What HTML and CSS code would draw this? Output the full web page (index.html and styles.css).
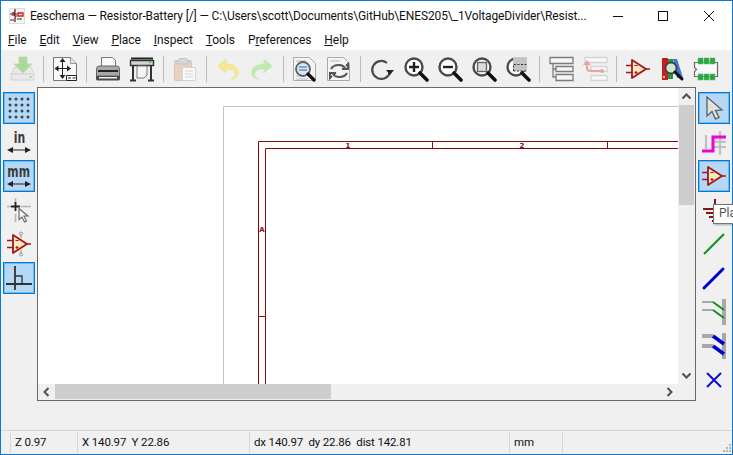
FILE: index.html
```html
<!DOCTYPE html>
<html>
<head>
    <meta charset="utf-8">
    <title>Eeschema</title>
    <link rel="stylesheet" href="styles.css">
</head>
<body>
    <svg class="defs" width="0" height="0">
        <defs>
            <g id="lens">
                <circle cx="11" cy="11" r="8.500" fill="#fff" stroke="#4a4a4a" stroke-width="2.400"/>
                <path d="M17 17l7 7" stroke="#111" stroke-width="3.600" stroke-linecap="round"/>
            </g>
            <g id="amp">
                <path d="M7 4l14 9-14 9z" fill="#fbe6c0" stroke="#a01818" stroke-width="1.800" stroke-linejoin="round"/>
                <path d="M1 9.500h6M1 16.500h6M21 13h4" stroke="#a01818" stroke-width="1.600"/>
                <path d="M9.500 9.500h3M9.500 16.500h3M11 15v3" stroke="#a01818" stroke-width="1.200"/>
            </g>
        </defs>
    </svg>

    <div class="window">
        <div class="titlebar">
            <svg class="app-icon" viewBox="0 0 16 16">
                <rect x="0.500" y="0.500" width="15" height="15" fill="#f4f4f4" stroke="#ddd"/>
                <path d="M6 1v3l-2 1 3 1-3 1 3 1-1 1v5" fill="none" stroke="#7a1c1c" stroke-width="1.300"/>
                <path d="M1 6h3M1 12h4" stroke="#333" stroke-width="1.200"/>
                <path d="M9 5h5v3H9z" fill="none" stroke="#d01818" stroke-width="1.300"/>
                <path d="M8 11h5" stroke="#1c8a2e" stroke-width="1.300"/>
            </svg>
            <span class="title-text">Eeschema — Resistor-Battery [/] — C:\Users\scott\Documents\GitHub\ENES205\_1VoltageDivider\Resist...</span>
            <div class="caption-btns">
                <svg viewBox="0 0 45 30"><path d="M17 15.500h10" stroke="#111"/></svg>
                <svg viewBox="0 0 45 30"><rect x="17.500" y="10.500" width="9" height="9" fill="none" stroke="#111"/></svg>
                <svg viewBox="0 0 45 30"><path d="M18 10l10 10M28 10L18 20" stroke="#111"/></svg>
            </div>
        </div>

        <div class="menubar">
            <span class="menu-item"><u>F</u>ile</span>
            <span class="menu-item"><u>E</u>dit</span>
            <span class="menu-item"><u>V</u>iew</span>
            <span class="menu-item"><u>P</u>lace</span>
            <span class="menu-item"><u>I</u>nspect</span>
            <span class="menu-item"><u>T</u>ools</span>
            <span class="menu-item">P<u>r</u>eferences</span>
            <span class="menu-item"><u>H</u>elp</span>
        </div>

        <div class="toolbar">
            <div class="tool">
                <svg viewBox="0 0 26 26">
                    <path d="M2 18l4-7h16l3 7v6H2z" fill="#e8e8e8" stroke="#d4d4d4"/>
                    <path d="M2 18h23" stroke="#cfcfcf"/>
                    <circle cx="21.500" cy="21" r="1" fill="#7fd67f"/>
                    <path d="M10 1h8v7h5l-9 9-9-9h5z" fill="#a9d99b" stroke="#c3dcb8"/>
                </svg>
            </div>
            <div class="sep"></div>
            <div class="tool">
                <svg viewBox="0 0 26 26">
                    <path d="M1.500 1.500h17l6 6v17h-23z" fill="#fafafa" stroke="#777"/>
                    <path d="M18.500 1.500v6h6" fill="#e4e4e4" stroke="#999"/>
                    <path d="M10.500 4v17M3.500 12.500h15" stroke="#222"/>
                    <path d="M10.500 2l-3 4h6zM10.500 23l-3-4h6zM2.500 12.500l4-3v6zM19 12.500l-4-3v6z" fill="#222"/>
                    <path d="M14.500 19.500h10v5h-10z" fill="#fff" stroke="#222"/>
                    <path d="M16 22h3M20.500 22h3" stroke="#222"/>
                </svg>
            </div>
            <div class="sep"></div>
            <div class="tool">
                <svg viewBox="0 0 26 26">
                    <path d="M6.500 11V1.500h11l3 3V11" fill="#fafafa" stroke="#777"/>
                    <path d="M1.500 13q0-3 3-3h17q3 0 3 3v7h-23z" fill="#a8a8a8" stroke="#666"/>
                    <path d="M3 15h20" stroke="#222" stroke-width="2"/>
                    <path d="M1 20h24v3q0 1.500-2 1.500H3Q1 24.500 1 23z" fill="#4a4a4a"/>
                    <path d="M4 21h18v1.500H4z" fill="#f0f0f0"/>
                    <circle cx="22.500" cy="18" r="1" fill="#4fd04f"/>
                </svg>
            </div>
            <div class="tool">
                <svg viewBox="0 0 26 26">
                    <path d="M1.500 4.500h23v5h-23z" fill="#d4d4d4" stroke="#333" stroke-width="1.400"/>
                    <path d="M2 2.500h22" stroke="#222" stroke-width="2"/>
                    <path d="M4 9v15M22 9v15M1 24.500h6M19 24.500h6" stroke="#333" stroke-width="2"/>
                    <path d="M8 10h10v9l-3 3H8z" fill="#f6f6f6" stroke="#777"/>
                    <circle cx="21" cy="6" r="1.200" fill="#3ecf3e"/>
                </svg>
            </div>
            <div class="sep"></div>
            <div class="tool">
                <svg viewBox="0 0 26 26">
                    <rect x="2.500" y="4.500" width="17" height="20" rx="1.500" fill="#e6d3bd" stroke="#d5c4b0"/>
                    <path d="M7 5V2.500h8V5h2v3H5V5z" fill="#d8d8d8" stroke="#c4c4c4"/>
                    <path d="M10.500 11.500h13v13h-13z" fill="#fafafa" stroke="#d4d4d4"/>
                    <path d="M13 15h8M13 18h8M13 21h8" stroke="#d0d0d0"/>
                </svg>
            </div>
            <div class="sep"></div>
            <div class="tool">
                <svg viewBox="0 0 26 26">
                    <path d="M11 3L3 10l8 7v-4c5 0 8 1 9 4 1 2-1 5-4 6 6 0 8-4 7-8-1-5-6-7-12-7z" fill="#f7e98f" stroke="#f0e0a0"/>
                </svg>
            </div>
            <div class="tool">
                <svg viewBox="0 0 26 26">
                    <path d="M15 3l8 7-8 7v-4c-5 0-8 1-9 4-1 2 1 5 4 6-6 0-8-4-7-8 1-5 6-7 12-7z" fill="#bfe8b0" stroke="#cfeac4"/>
                </svg>
            </div>
            <div class="sep"></div>
            <div class="tool">
                <svg viewBox="0 0 26 26">
                    <path d="M1.500 1.500h16l6 6v17h-22z" fill="#f4f4f4" stroke="#aaa"/>
                    <path d="M4 5h10M4 20h6M4 23h12" stroke="#bbb"/>
                    <circle cx="11" cy="13" r="7" fill="#dbe6f4" stroke="#566" stroke-width="1.800"/>
                    <path d="M7 11h8M7 14h8" stroke="#6c8fc4" stroke-width="1.400"/>
                    <path d="M16 18l6 6" stroke="#111" stroke-width="3.200" stroke-linecap="round"/>
                </svg>
            </div>
            <div class="tool">
                <svg viewBox="0 0 26 26">
                    <path d="M1.500 1.500h16l6 6v17h-22z" fill="#f4f4f4" stroke="#aaa"/>
                    <path d="M4 5h10" stroke="#bbb"/>
                    <path d="M5 13q2-4 8-4 4 0 6 3l-3 1h6V8l-2 2" fill="none" stroke="#555" stroke-width="2"/>
                    <path d="M21 17q-2 4-8 4-4 0-6-3l3-1H4v5l2-2" fill="none" stroke="#555" stroke-width="2"/>
                </svg>
            </div>
            <div class="sep"></div>
            <div class="tool">
                <svg viewBox="0 0 26 26">
                    <path d="M21 16a9 9 0 1 1-3-9" fill="none" stroke="#4a4a4a" stroke-width="2.200"/>
                    <path d="M17 14h8l-4 5z" fill="#222"/>
                </svg>
            </div>
            <div class="tool">
                <svg viewBox="0 0 26 26">
                    <use href="#lens"/>
                    <path d="M6 11h10M11 6v10" stroke="#222" stroke-width="2.400"/>
                </svg>
            </div>
            <div class="tool">
                <svg viewBox="0 0 26 26">
                    <use href="#lens"/>
                    <path d="M6 11h10" stroke="#222" stroke-width="2.400"/>
                </svg>
            </div>
            <div class="tool">
                <svg viewBox="0 0 26 26">
                    <use href="#lens"/>
                    <rect x="6.500" y="6.500" width="9" height="9" fill="#ddd" stroke="#666" stroke-width="1.400"/>
                </svg>
            </div>
            <div class="tool">
                <svg viewBox="0 0 26 26">
                    <use href="#lens"/>
                    <rect x="8" y="1" width="14" height="14" fill="#c4c4c4"/>
                    <path d="M8.500 15V8.500h13.500" fill="none" stroke="#333" stroke-dasharray="2 1.500"/>
                    <path d="M8.500 15H22" fill="none" stroke="#333" stroke-dasharray="2 1.500"/>
                </svg>
            </div>
            <div class="sep"></div>
            <div class="tool">
                <svg viewBox="0 0 26 26">
                    <path d="M2 1.500h23v6H2zM8 10.500h17v5H8zM8 18.500h17v6H8z" fill="#f6f6f6" stroke="#7c7c7c" stroke-width="1.300"/>
                    <path d="M5 8v13h3M5 13h3" fill="none" stroke="#7c7c7c" stroke-width="1.300"/>
                </svg>
            </div>
            <div class="tool">
                <svg viewBox="0 0 26 26">
                    <path d="M3 1.500h22v5H3zM9 10.500h16v5H9zM9 19.500h16v5H9z" fill="#f8f8f8" stroke="#d4d4d4" stroke-width="1.300"/>
                    <path d="M5 8v4q0 3 3 3h11" fill="none" stroke="#f0a0a0" stroke-width="2"/>
                    <path d="M1 9l4-5 4 5z" fill="#f0a0a0"/>
                    <circle cx="20" cy="15" r="2" fill="#f0a0a0"/>
                </svg>
            </div>
            <div class="sep"></div>
            <div class="tool">
                <svg viewBox="0 0 26 26"><use href="#amp"/></svg>
            </div>
            <div class="tool">
                <svg viewBox="0 0 26 26">
                    <rect x="3" y="2" width="6" height="22" fill="#c81e1e"/>
                    <rect x="9" y="3" width="5" height="20" fill="#1f9c3a"/>
                    <path d="M14 3h4l6 19h-6z" fill="#3f74d8"/>
                    <circle cx="5" cy="21" r="1" fill="#fff"/>
                    <circle cx="12" cy="12" r="5.500" fill="#cfe6d2" stroke="#444" stroke-width="1.800"/>
                    <path d="M16 16l7 7" stroke="#111" stroke-width="3" stroke-linecap="round"/>
                </svg>
            </div>
            <div class="tool">
                <svg viewBox="0 0 26 26">
                    <path d="M1.500 6.500h23v14h-23v-5l2-2-2-2z" fill="#fafafa" stroke="#6a6a6a" stroke-width="1.200"/>
                    <path d="M5 2h5v6H5zM11 2h5v6h-5zM17 2h5v6h-5zM5 18h5v6H5zM11 18h5v6h-5zM17 18h5v6h-5z" fill="#22aa3c" stroke="#6cb87a" stroke-width="0.600"/>
                </svg>
            </div>
        </div>

        <div class="workspace">
            <div class="side-tools">
                <div class="tool on">
                    <svg viewBox="0 0 26 26" class="grid-dots">
                        <circle cx="4" cy="4" r="1.500"/><circle cx="10" cy="4" r="1.500"/><circle cx="16" cy="4" r="1.500"/><circle cx="22" cy="4" r="1.500"/>
                        <circle cx="4" cy="10" r="1.500"/><circle cx="10" cy="10" r="1.500"/><circle cx="16" cy="10" r="1.500"/><circle cx="22" cy="10" r="1.500"/>
                        <circle cx="4" cy="16" r="1.500"/><circle cx="10" cy="16" r="1.500"/><circle cx="16" cy="16" r="1.500"/><circle cx="22" cy="16" r="1.500"/>
                        <circle cx="4" cy="22" r="1.500"/><circle cx="10" cy="22" r="1.500"/><circle cx="16" cy="22" r="1.500"/><circle cx="22" cy="22" r="1.500"/>
                    </svg>
                </div>
                <div class="tool">
                    <span class="unit-text">in</span>
                    <svg class="unit-arrow" viewBox="0 0 26 8"><path d="M1 4l6-3v6zM25 4l-6-3v6z" fill="#222"/><path d="M4 4h18" stroke="#222"/></svg>
                </div>
                <div class="tool on">
                    <span class="unit-text">mm</span>
                    <svg class="unit-arrow" viewBox="0 0 26 8"><path d="M1 4l6-3v6zM25 4l-6-3v6z" fill="#222"/><path d="M4 4h18" stroke="#222"/></svg>
                </div>
                <div class="tool">
                    <svg viewBox="0 0 26 26">
                        <path d="M9.500 1v5M9.500 17v8M1 9.500h4M15 9.500h10" stroke="#b4b4b4" stroke-width="1.600"/>
                        <path d="M9.500 5v9M5 9.500h9" stroke="#222" stroke-width="1.800"/>
                        <path d="M13 11.500v11l3-2.500 2.500 5 2-1-2.500-5h4z" fill="#f4f4f4" stroke="#666" stroke-width="1.100"/>
                    </svg>
                </div>
                <div class="tool">
                    <svg viewBox="0 0 26 26">
                        <path d="M15 1v6M15 19v6" stroke="#b0b0b0" stroke-width="1.400"/>
                        <circle cx="15" cy="2.500" r="1.500" fill="#eee" stroke="#999"/>
                        <circle cx="15" cy="23.500" r="1.500" fill="#eee" stroke="#999"/>
                        <use href="#amp"/>
                    </svg>
                </div>
                <div class="tool on">
                    <svg viewBox="0 0 26 26">
                        <path d="M9 1v24M0 19h26" stroke="#333" stroke-width="1.800"/>
                        <path d="M9 11h7v8" fill="none" stroke="#333" stroke-width="1.300"/>
                    </svg>
                </div>
            </div>

            <div class="view-frame">
                <div class="canvas">
                    <svg class="sheet" width="640" height="296" viewBox="38 88 640 296">
                        <path d="M223.500 384V106.500H678" fill="none" stroke="#c4c4c4"/>
                        <path d="M258.500 384V141.500H678M265.500 384V148.500H678" fill="none" stroke="#8a0a0a"/>
                        <path d="M432.500 141v7M607.500 141v7M258 316.500h7" stroke="#8a0a0a"/>
                        <text x="348" y="148" class="sheet-label">1</text>
                        <text x="522" y="148" class="sheet-label">2</text>
                        <text x="262" y="232" class="sheet-label">A</text>
                    </svg>
                </div>
                <div class="vbar">
                    <svg class="arrow" viewBox="0 0 17 17"><path d="M4.500 10.500l4-4 4 4" fill="none" stroke="#505050" stroke-width="2"/></svg>
                    <div class="vthumb"></div>
                    <div class="spacer"></div>
                    <svg class="arrow" viewBox="0 0 17 17"><path d="M4.500 6.500l4 4 4-4" fill="none" stroke="#505050" stroke-width="2"/></svg>
                </div>
                <div class="hbar">
                    <svg class="arrow" viewBox="0 0 17 16"><path d="M10.500 4l-4 4 4 4" fill="none" stroke="#505050" stroke-width="2"/></svg>
                    <div class="hthumb"></div>
                    <div class="spacer"></div>
                    <svg class="arrow" viewBox="0 0 17 16"><path d="M6.500 4l4 4-4 4" fill="none" stroke="#505050" stroke-width="2"/></svg>
                </div>
                <div class="corner"></div>
            </div>

            <div class="side-tools">
                <div class="tool on">
                    <svg viewBox="0 0 26 26">
                        <path d="M6 2v19l5-4.500 3.500 7.500 3.500-1.500-3.500-7 6.500-.5z" fill="#e2e2e2" stroke="#666" stroke-width="1.400"/>
                    </svg>
                </div>
                <div class="tool">
                    <svg viewBox="0 0 26 26">
                        <path d="M5 6v14M19 2v24M13 13h12M13 18h12" stroke="#c0c0c0" stroke-width="2.200"/>
                        <path d="M1 22h11V8h13" fill="none" stroke="#f000e0" stroke-width="3"/>
                    </svg>
                </div>
                <div class="tool on">
                    <svg viewBox="0 0 26 26"><use href="#amp"/></svg>
                </div>
                <div class="tool">
                    <svg viewBox="0 0 26 26">
                        <path d="M14 2v10M2 12h16M5 16h12M8 20h9M11 24h5" stroke="#8a1414" stroke-width="2"/>
                    </svg>
                </div>
                <div class="tool">
                    <svg viewBox="0 0 26 26"><path d="M3 23L23 3" stroke="#0e8f1a" stroke-width="2"/></svg>
                </div>
                <div class="tool">
                    <svg viewBox="0 0 26 26"><path d="M3 23L22 4" stroke="#0000cc" stroke-width="3" stroke-linecap="round"/></svg>
                </div>
                <div class="tool">
                    <svg viewBox="0 0 26 26">
                        <path d="M23 0v26" stroke="#a8a8a8" stroke-width="4"/>
                        <path d="M1 3h11M1 11h11" stroke="#a8a8a8" stroke-width="2"/>
                        <path d="M12 3l11 8M12 11l11 8" stroke="#0e8f1a" stroke-width="2"/>
                    </svg>
                </div>
                <div class="tool">
                    <svg viewBox="0 0 26 26">
                        <path d="M23 0v26" stroke="#a8a8a8" stroke-width="4"/>
                        <path d="M1 3h11M1 13h11" stroke="#a8a8a8" stroke-width="4"/>
                        <path d="M12 3l11 8M12 13l11 8" stroke="#0000cc" stroke-width="3.500"/>
                    </svg>
                </div>
                <div class="tool">
                    <svg viewBox="0 0 26 26"><path d="M6 6l14 14M20 6L6 20" stroke="#1010cc" stroke-width="2"/></svg>
                </div>
            </div>
        </div>

        <div class="msg-panel"></div>

        <div class="statusbar">
            <span class="cell cell-zoom">Z 0.97</span>
            <span class="cell cell-abs">X 140.97&nbsp; Y 22.86</span>
            <span class="cell cell-rel">dx 140.97&nbsp; dy 22.86&nbsp; dist 142.81</span>
            <span class="cell cell-unit">mm</span>
            <svg class="grip" viewBox="0 0 12 12"><path d="M9 2h2v2H9zM6 5h2v2H6zM9 5h2v2H9zM3 8h2v2H3zM6 8h2v2H6zM9 8h2v2H9z" fill="#b4b4b4"/></svg>
        </div>

        <div class="tooltip">Pla</div>
    </div>
</body>
</html>
```

FILE: styles.css
```css
/* Reset some default styles */
html, body {
    margin: 0;
    padding: 0;
    overflow: hidden;
}

body {
    font-family: Roboto, Arial, sans-serif;
    font-size: 12px;
    color: #111;
    background-color: #f0f0f0;
}

.defs {
    display: block;
    height: 0;
}

/* Main window */
.window {
    position: relative;
    box-sizing: border-box;
    width: 733px;
    height: 455px;
    border: 1px solid #0a7ad2;
    display: flex;
    flex-direction: column;
}

.titlebar {
    height: 29px;
    flex: none;
    background-color: #fff;
    display: flex;
    align-items: center;
    padding-left: 8px;
}

.app-icon {
    width: 16px;
    height: 16px;
    flex: none;
    margin-right: 5px;
}

.title-text {
    flex: 1;
    min-width: 0;
    letter-spacing: -0.12px;
    white-space: nowrap;
}

.caption-btns {
    display: flex;
    flex: none;
    margin-right: 1px;
}

.caption-btns svg {
    width: 45px;
    height: 30px;
}

.menubar {
    height: 20px;
    flex: none;
    background-color: #fff;
    display: flex;
    align-items: center;
    padding-left: 7px;
}

.menu-item {
    margin-right: 13px;
    letter-spacing: -0.06px;
}

/* Top toolbar */
.toolbar {
    height: 37px;
    flex: none;
    padding-left: 4px;
    background-color: #f0f0f0;
    display: flex;
    align-items: center;
}

.tool {
    position: relative;
    box-sizing: border-box;
    width: 34px;
    height: 34px;
    flex: none;
    display: flex;
    flex-direction: column;
    align-items: center;
    justify-content: center;
}

.tool svg {
    position: relative;
    width: 26px;
    height: 26px;
}

.sep {
    width: 9px;
    height: 26px;
    flex: none;
    background: linear-gradient(#bcbcbc, #bcbcbc) no-repeat 4px 0 / 1px 100%;
}

/* Side toolbars */
.workspace {
    height: 314px;
    flex: none;
    display: flex;
}

.side-tools {
    box-sizing: border-box;
    width: 36px;
    padding: 4px 1px 0;
    flex: none;
}

/* Pressed toggle button */
.tool.on::before {
    content: "";
    position: absolute;
    top: 1px;
    left: 1px;
    right: 1px;
    bottom: 1px;
    border: 1px solid #0078d7;
    box-sizing: border-box;
    background-color: #b4d8f6;
    box-shadow: inset 0 0 0 1px rgba(0, 120, 215, 0.35);
}

.grid-dots circle {
    fill: #3a4650;
}

.unit-text {
    position: relative;
    font-family: "DejaVu Sans", sans-serif;
    font-size: 16px;
    font-weight: bold;
    line-height: 16px;
    color: #3a3a3a;
    transform: scaleX(0.68);
}

.tool svg.unit-arrow {
    height: 8px;
}

/* Drawing area with scrollbars */
.view-frame {
    box-sizing: border-box;
    width: 659px;
    flex: none;
    border: 1px solid #696969;
    display: grid;
    grid-template-columns: 640px 17px;
    grid-template-rows: 296px 16px;
    background-color: #f0f0f0;
}

.canvas {
    background-color: #fff;
}

.sheet {
    display: block;
}

.sheet-label {
    font-family: "DejaVu Sans", sans-serif;
    font-size: 7px;
    font-weight: bold;
    fill: #8a0a0a;
    text-anchor: middle;
}

.vbar {
    display: flex;
    flex-direction: column;
}

.hbar {
    display: flex;
}

.arrow {
    width: 17px;
    height: 17px;
    flex: none;
}

.hbar .arrow {
    height: 16px;
}

.spacer {
    flex: 1;
}

.vthumb {
    height: 100px;
    margin: 0 1px;
    background-color: #cdcdcd;
}

.hthumb {
    width: 276px;
    margin-bottom: 1px;
    background-color: #cdcdcd;
}

/* Bottom panels */
.msg-panel {
    height: 30px;
    flex: none;
    border-bottom: 1px solid #d7d7d7;
    box-sizing: border-box;
}

.statusbar {
    flex: 1;
    min-height: 0;
    display: flex;
    align-items: stretch;
    padding-left: 9px;
    position: relative;
}

.cell {
    box-sizing: border-box;
    border-left: 1px solid #d7d7d7;
    padding: 1px 0 0 4px;
    margin: 1px 0;
    font-size: 11.5px;
    letter-spacing: -0.15px;
    line-height: 19px;
    white-space: nowrap;
}

.cell-zoom { width: 67px; }
.cell-abs { width: 172px; }
.cell-rel { width: 260px; }
.cell-unit { width: 54px; border-right: 1px solid #d7d7d7; }

.grip {
    position: absolute;
    right: 0;
    bottom: 0;
    width: 12px;
    height: 12px;
}

.tooltip {
    position: absolute;
    top: 203px;
    left: 712px;
    box-sizing: border-box;
    width: 30px;
    height: 20px;
    border: 1px solid #767676;
    background-color: #fff;
    padding-left: 5px;
    line-height: 17px;
    color: #555;
    white-space: nowrap;
    box-shadow: 1px 1px 2px rgba(0, 0, 0, 0.3);
}
```
